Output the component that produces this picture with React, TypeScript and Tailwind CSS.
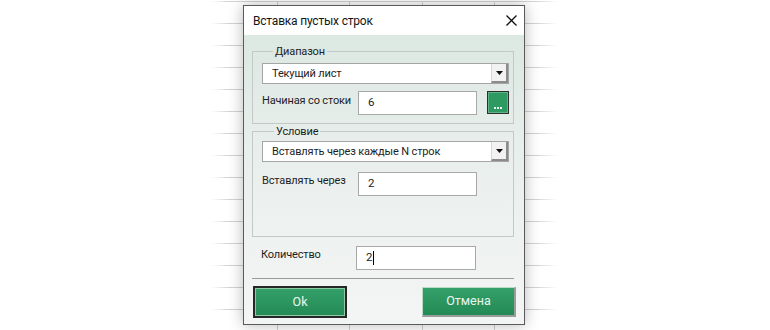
import React from "react";

const rows = Array.from({ length: 15 });
const cols = [67, 72, 73, 72, 63];

const txt = "text-[11px] tracking-[-0.15px] text-[#1e1e1e]";

function Combo({ text }: { text: string }) {
  return (
    <div className="flex h-[21px] border border-[#a5a5a5] bg-white">
      <div className={`flex flex-1 items-center pl-[9px] leading-none ${txt}`}>{text}</div>
      <div className="flex w-[17px] items-center justify-center border-l border-l-[#d6d6d6] border-r-2 border-b-2 border-r-[#8c8c8c] border-b-[#8c8c8c] bg-[#f2f2f2]">
        <svg width="7" height="4" viewBox="0 0 7 4">
          <path d="M0 0H7L3.5 4Z" fill="#111" />
        </svg>
      </div>
    </div>
  );
}

function TextBox({ value, caret = false, w = "w-[119px]" }: { value: string; caret?: boolean; w?: string }) {
  return (
    <div className={`${w} flex h-[24px] items-center border border-[#a8a8a8] bg-white pl-[9px] text-[11.5px] leading-none text-[#222]`}>
      <span>{value}</span>
      {caret && <span className="ml-[1px] inline-block h-[14px] w-[1px] bg-black" />}
    </div>
  );
}

export default function App() {
  return (
    <div className="relative h-[330px] w-[770px] overflow-hidden bg-white font-['Roboto','Noto_Sans',sans-serif]">
      {/* spreadsheet grid */}
      <div className="ml-[211px] mt-[1px] w-[347px] [mask-image:linear-gradient(to_right,transparent,black_18px,black_325px,transparent)]">
        {rows.map((_, i) => (
          <div key={i} className="flex h-[22px] border-t border-[#d2d2d2]">
            {cols.map((c, j) => (
              <div
                key={j}
                style={{ width: c }}
                className={j < cols.length - 1 ? "h-full border-r border-[#d2d2d2]" : "h-full"}
              />
            ))}
          </div>
        ))}
      </div>

      {/* dialog */}
      <div className="absolute left-[243px] top-[5px] flex h-[320px] w-[282px] flex-col border border-[#5a5a5a] bg-white shadow-[0_0_14px_rgba(0,0,0,0.28)]">
        <div className="flex h-[29px] items-center justify-between pl-[9px] pr-[7px]">
          <span className="whitespace-nowrap text-[12px] tracking-[-0.2px] leading-none text-[#151515]">Вставка пустых строк</span>
          <svg width="11" height="11" viewBox="0 0 11 11">
            <path d="M0.5 0.5L10.5 10.5M10.5 0.5L0.5 10.5" stroke="#111" strokeWidth="1.3" />
          </svg>
        </div>

        <div className="flex flex-1 flex-col bg-gradient-to-b from-[#dce8e2] via-[#ebf0ee] to-[#f3f5f4] pl-[8px] pr-[10px]">
          <fieldset className="mt-[9px] border border-[#c3c9c6] pb-[8px] pl-[9px] pr-[4px]">
            <legend className={`ml-[11px] px-[2px] leading-[15px] ${txt}`}>Диапазон</legend>
            <div className="mt-[4px]">
              <Combo text="Текущий лист" />
            </div>
            <div className="mt-[7px] flex items-start">
              <span className={`mt-[2px] w-[96px] whitespace-nowrap leading-[15px] ${txt}`}>Начиная со стоки</span>
              <TextBox value="6" />
              <div className="ml-[10px] flex h-[23px] w-[22px] items-end justify-center gap-[1px] border border-[#2e2e2e] bg-[#2f9962] pb-[4px] shadow-[inset_0_0_0_1px_#5fb587]">
                <span className="h-[2px] w-[2px] bg-[#e8f6ee]" />
                <span className="h-[2px] w-[2px] bg-[#e8f6ee]" />
                <span className="h-[2px] w-[2px] bg-[#e8f6ee]" />
              </div>
            </div>
          </fieldset>

          <fieldset className="border border-[#c3c9c6] pb-[40px] pl-[9px] pr-[4px]">
            <legend className={`ml-[12px] px-[2px] leading-[15px] ${txt}`}>Условие</legend>
            <div className="mt-[2px]">
              <Combo text="Вставлять через каждые N строк" />
            </div>
            <div className="mt-[10px] flex items-start">
              <span className={`mt-[1px] w-[96px] whitespace-nowrap leading-[15px] ${txt}`}>Вставлять через</span>
              <TextBox value="2" />
            </div>
          </fieldset>

          <div className="ml-[9px] mt-[9px] flex items-start">
            <span className={`mt-[1px] w-[95px] whitespace-nowrap leading-[15px] ${txt}`}>Количество</span>
            <TextBox value="2" caret w="w-[120px]" />
          </div>

          <div className="mt-[8px] h-[1px] bg-[#9a9a9a]" />

          <div className="ml-[1px] mr-[-2px] mt-[7px] flex items-start justify-between">
            <div className="flex h-[32px] w-[94px] items-center justify-center border-2 border-[#262626] bg-gradient-to-b from-[#34a06a] to-[#238a55] shadow-[inset_0_0_0_1px_#8cc9a5] text-[12.5px] leading-none text-[#eaf7ef]">
              Ok
            </div>
            <div className="mt-[1px] flex h-[30px] w-[94px] items-center justify-center border border-[#b8d9c5] border-r-2 border-b-2 border-r-[#9b9b9b] border-b-[#9b9b9b] bg-gradient-to-b from-[#34a06a] to-[#238a55] text-[12.5px] leading-none text-[#eaf7ef]">
              Отмена
            </div>
          </div>
        </div>
      </div>
    </div>
  );
}
